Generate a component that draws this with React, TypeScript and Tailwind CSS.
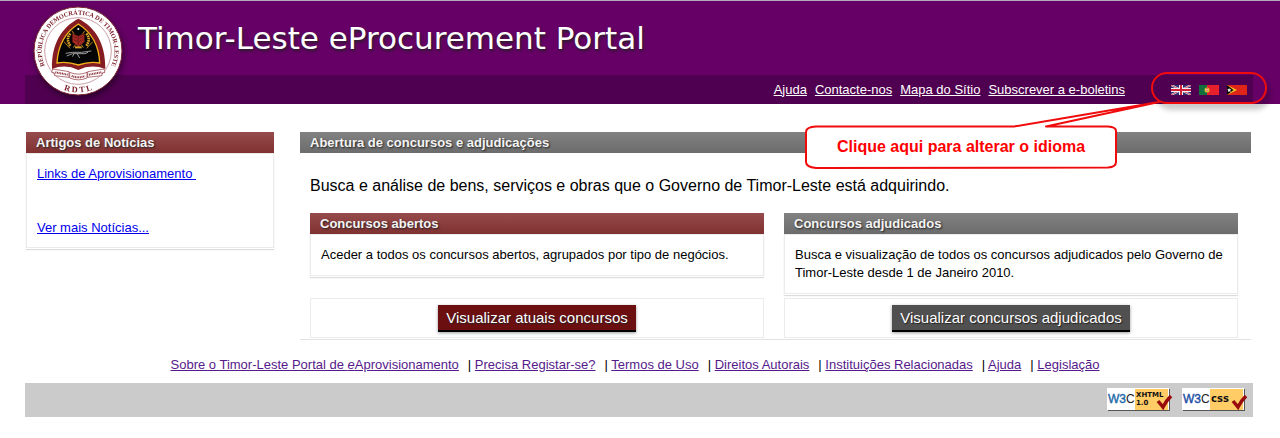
import React from 'react';

const topLinks = ['Ajuda', 'Contacte-nos', 'Mapa do Sítio', 'Subscrever a e-boletins'];

const footerLinks = [
    'Precisa Registar-se?',
    'Termos de Uso',
    'Direitos Autorais',
    'Instituições Relacionadas',
    'Ajuda',
    'Legislação',
];

const Emblem: React.FC = () => (
    <svg className="h-[90px] w-[90px] drop-shadow-[1px_3px_3px_rgba(0,0,0,0.5)]" viewBox="15 13 270 270" role="img" aria-label="República Democrática de Timor-Leste">
        <defs>
            <path id="ring-top" d="M 57 205 A 109 109 0 1 1 243 205" />
            <path id="ring-bottom" d="M 90 257 A 124 124 0 0 0 210 257" />
        </defs>
        <circle cx="150" cy="148" r="132" fill="#fff" stroke="#7d2630" strokeWidth="3" />
        <circle cx="150" cy="148" r="127" fill="none" stroke="#fff" strokeWidth="4" />
        <circle cx="150" cy="148" r="100" fill="none" stroke="#b0707a" strokeWidth="2" />
        <text fontFamily="'Liberation Serif', serif" fontWeight="700" fontSize="19" fill="#7a1c26">
            <textPath href="#ring-top" startOffset="50%" textAnchor="middle">REPÚBLICA DEMOCRÁTICA DE TIMOR-LESTE</textPath>
        </text>
        <text fontFamily="'Liberation Serif', serif" fontWeight="700" fontSize="25" fill="#7a1c26">
            <textPath href="#ring-bottom" startOffset="50%" textAnchor="middle">R D T L</textPath>
        </text>
        {/* spire */}
        <path d="M151 51 C200 75 233 123 232 202 Q190 186 151 205 Q112 186 72 202 C70 123 104 75 151 51Z" fill="#841c22" />
        <path d="M151 67 C190 92 213 130 215 184 Q185 178 151 190 Q117 178 87 184 C90 130 112 92 151 67Z" fill="#050505" stroke="#f2b21c" strokeWidth="4" />
        <circle cx="151" cy="82" r="3" fill="#fff" />
        {/* corn, rice and tools */}
        <path d="M127 96 Q112 112 128 134 M175 96 Q190 112 174 134" fill="none" stroke="#dca42a" strokeWidth="8" strokeDasharray="5 2" />
        <path d="M108 120 l18 20 M194 120 l-18 20 M132 88 l34 50 M170 88 l-34 50" fill="none" stroke="#b98520" strokeWidth="3" />
        <path d="M133 96 l18 7 18 -7 v25 l-18 14 -18 -14z" fill="#a52823" stroke="#4d1010" strokeWidth="2" />
        <path d="M151 103 v26 M137 105 l11 5 M165 105 l-11 5 M137 114 l11 5 M165 114 l-11 5" fill="none" stroke="#4d1010" strokeWidth="2" />
        <path d="M141 134 h20 v6 h-20z" fill="#d89f28" />
        {/* rifle */}
        <path d="M113 155 l20 -3 h27 l30 -4 M116 163 l17 -7 h38 l9 -4 M148 157 l7 12 M137 157 l-3 8" fill="none" stroke="#999" strokeWidth="3" />
        {/* motto ribbon */}
        <path d="M74 202 l49 8 v17 l-43 -5 v-8 l-9 -2z M228 202 l-49 8 v17 l43 -5 v-8 l9 -2z" fill="#fff" stroke="#8b3038" strokeWidth="2" />
        <path d="M125 212 Q151 223 177 212 v17 Q151 240 125 229z" fill="#fff" stroke="#8b3038" strokeWidth="2" />
        <path d="M82 212 l37 7 M220 212 l-37 7 M131 223 Q151 231 171 223" fill="none" stroke="#8b3038" strokeWidth="6" strokeDasharray="3 2" />
    </svg>
);

const FlagUK: React.FC = () => (
    <svg className="h-[10px] w-5" viewBox="0 0 20 10" role="img" aria-label="English">
        <path fill="#2b2f72" d="M0 0h20v10H0z" />
        <path stroke="#e8e4f0" strokeWidth="2" d="M0 0l20 10M20 0L0 10" />
        <path stroke="#c8283c" strokeWidth=".8" d="M0 0l20 10M20 0L0 10" />
        <path stroke="#f3eef5" strokeWidth="4" d="M10 0v10M0 5h20" />
        <path stroke="#cf2138" strokeWidth="2" d="M10 0v10M0 5h20" />
    </svg>
);

const FlagPortugal: React.FC = () => (
    <svg className="h-[10px] w-5" viewBox="0 0 20 10" role="img" aria-label="Português">
        <path fill="#e8202c" d="M0 0h20v10H0z" />
        <path fill="#12703c" d="M0 0h8v10H0z" />
        <circle cx="8" cy="5" r="2.5" fill="#d8c83c" />
        <path fill="#e04848" d="M7 3.5h2v2l-1 1-1-1z" />
        <path fill="#fff" d="M7.500 4h1v1.500h-1z" />
    </svg>
);

const FlagTimor: React.FC = () => (
    <svg className="h-[10px] w-5" viewBox="0 0 20 10" role="img" aria-label="Tetum">
        <path fill="#df2418" d="M0 0h20v10H0z" />
        <path fill="#f5c52c" d="M0 0l10 5-10 5z" />
        <path fill="#080808" d="M0 0l6.500 5L0 10z" />
        <path fill="#fff" d="M2 3l.7 1.300 1.500 0-1 1.200.4 1.500-1.400-.8-1.200.7.200-1.500-1-1 1.400-.2z" />
    </svg>
);

const W3CBadge: React.FC<{ lines: string[]; blue: string }> = ({ lines, blue }) => (
    <svg className="h-6 w-[67px]" viewBox="0 0 67 24" role="img" aria-label={'W3C ' + lines.join(' ')}>
        <path fill="#555" d="M1 1h62v22H1z" />
        <path fill="#fff" d="M0 0h62v22H0z" />
        <path fill="#ffcc66" d="M28 1h33v21H28z" />
        <text x="1" y="15" fontFamily="'Liberation Sans', sans-serif" fontSize="12" fill={blue} stroke={blue} strokeWidth=".4">
            W3<tspan fill="#222" stroke="none">C</tspan>
        </text>
        {lines.map((line, i) => (
            <text
                key={line}
                x="29"
                y={lines.length > 1 ? 9 + i * 8 : 14}
                fontFamily="'DejaVu Sans', sans-serif"
                fontWeight="700"
                fontSize={lines.length > 1 ? 7 : 10}
                fill="#111"
            >
                {line}
            </text>
        ))}
        <path d="M51 13l5 6q3-6 8-11" fill="none" stroke="#990c0c" strokeWidth="3.500" />
    </svg>
);

const PanelTitle: React.FC<{ tone: 'red' | 'gray'; children: React.ReactNode }> = ({ tone, children }) => (
    <h2
        className={
            'h-[21px] px-[10px] text-[13px] font-bold leading-[21px] text-[#f4f4f4] [text-shadow:1px_1px_2px_#222] ' +
            (tone === 'red' ? 'bg-linear-to-b from-[#964b4c] to-[#803131]' : 'bg-linear-to-b from-[#828282] to-[#6c6c6c]')
        }
    >
        {children}
    </h2>
);

const panelBody = 'border border-[#ebebeb] px-[10px] shadow-[0_1px_0_#fff,0_2px_1px_#dcdcdc]';
const actionButton =
    'h-[27px] border-b-2 border-black px-2 text-[15px] leading-[25px] text-white shadow-[0_1px_3px_rgba(0,0,0,0.4)] [text-shadow:1px_1px_1px_#222]';

const App: React.FC = () => {
    return (
        <div className="bg-white font-['Liberation_Sans',Arial,sans-serif] text-[13px] leading-[18px] text-black">
            <header className="relative border-t border-[#b5a9bb] bg-[#660066] pl-[25px] pr-[27px]">
                <div className="flex h-[74px] items-start pl-[113px] pt-[18px]">
                    <h1 className="font-['DejaVu_Sans',sans-serif] text-[31px] leading-[38px] text-white [text-shadow:1px_2px_3px_#222]">
                        Timor-Leste <em className="not-italic">e</em>Procurement Portal
                    </h1>
                </div>
                <div className="flex h-[29px] items-center justify-end bg-[#500050] pr-[6px]">
                    <nav className="mr-[46px] flex gap-2 text-white">
                        {topLinks.map((label) => (
                            <a key={label} href="#" className="underline">
                                {label}
                            </a>
                        ))}
                    </nav>
                    <div className="flex gap-2">
                        <a href="#"><FlagUK /></a>
                        <a href="#"><FlagPortugal /></a>
                        <a href="#"><FlagTimor /></a>
                    </div>
                </div>

                <div className="absolute left-[33px] top-[5px]">
                    <Emblem />
                </div>

                {/* Language hint: ring round the flags and its balloon */}
                <div className="pointer-events-none absolute right-[13px] top-[71px] h-8 w-[116px] rounded-full border-2 border-[#f00c0c] shadow-[4px_6px_5px_rgba(0,0,0,0.2)]" />
                <div className="pointer-events-none absolute right-[119px] top-[100px] h-[69px] w-[357px]">
                    <svg className="absolute inset-0 h-full w-full" viewBox="0 0 357 69" aria-hidden="true">
                        <path
                            d="M12 25.500H210L355 1 242 25.500H304Q312 26 312 30V61Q312 66 304 66.500L12 67Q2 66 2 61V31Q2 26 12 25.500Z"
                            fill="#fff"
                            stroke="#f00c0c"
                            strokeWidth="2"
                            strokeLinejoin="round"
                        />
                    </svg>
                    <p className="relative pl-[33px] pt-9 text-[16px] font-bold leading-5 text-[#ff0000]">Clique aqui para alterar o idioma</p>
                </div>
            </header>

            <main className="flex items-start gap-[26px] pl-[26px] pr-[29px] pt-7">
                <aside className="w-[248px] shrink-0">
                    <PanelTitle tone="red">Artigos de Notícias</PanelTitle>
                    <div className={panelBody + ' flex flex-col items-start gap-9 pb-[10px] pt-[11px] text-[#0000ee]'}>
                        <a href="#" className="whitespace-pre underline">{'Links de Aprovisionamento '}</a>
                        <a href="#" className="underline">Ver mais Notícias...</a>
                    </div>
                </aside>

                <section className="grow border-b border-[#e2e2e2]">
                    <PanelTitle tone="gray">Abertura de concursos e adjudicações</PanelTitle>
                    <p className="px-[10px] pb-[17px] pt-[23px] text-[16px] leading-5">
                        Busca e análise de bens, serviços e obras que o Governo de Timor-Leste está adquirindo.
                    </p>
                    <div className="grid grid-cols-2 gap-x-5 gap-y-1 pb-px pl-[10px] pr-[13px]">
                        <div>
                            <PanelTitle tone="red">Concursos abertos</PanelTitle>
                            <div className={panelBody + ' py-[11px]'}>
                                Aceder a todos os concursos abertos, agrupados por tipo de negócios.
                            </div>
                        </div>
                        <div>
                            <PanelTitle tone="gray">Concursos adjudicados</PanelTitle>
                            <div className={panelBody + ' py-[11px]'}>
                                Busca e visualização de todos os concursos adjudicados pelo Governo de Timor-Leste desde 1 de Janeiro 2010.
                            </div>
                        </div>
                        <div className="flex h-10 items-center justify-center border border-[#ebebeb]">
                            <button className={actionButton + ' bg-[#6b0f10]'}>Visualizar atuais concursos</button>
                        </div>
                        <div className="flex h-10 items-center justify-center border border-[#ebebeb]">
                            <button className={actionButton + ' bg-[#505050]'}>Visualizar concursos adjudicados</button>
                        </div>
                    </div>
                </section>
            </main>

            <footer className="pl-[25px] pr-[27px] pt-4">
                <nav className="flex items-center justify-center gap-[9px] pr-2">
                    <a href="#" className="text-[#551a8b] underline">
                        Sobre o Timor-Leste Portal de <em>e</em>Aprovisionamento
                    </a>
                    {footerLinks.map((label) => (
                        <span key={label}>
                            | <a href="#" className="text-[#551a8b] underline">{label}</a>
                        </span>
                    ))}
                </nav>
                <div className="mt-[9px] flex h-[34px] items-center justify-end gap-2 bg-[#cbcbcb] pr-[4px]">
                    <a href="#"><W3CBadge lines={['XHTML', '1.0']} blue="#1f6ba8" /></a>
                    <a href="#"><W3CBadge lines={['css']} blue="#1e4fa8" /></a>
                </div>
            </footer>
        </div>
    );
};

export default App;
